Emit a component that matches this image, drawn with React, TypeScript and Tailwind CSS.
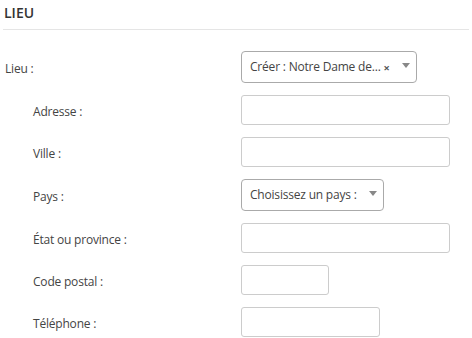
const font = { fontFamily: '"Segoe UI", "Open Sans", "Noto Sans", sans-serif' };

function TextInput({ width }: { width: string }) {
  return (
    <input
      type="text"
      className={`${width} h-[30px] rounded-[3px] border border-[#cccccc] bg-white px-2 text-[12px] text-[#444] outline-none`}
    />
  );
}

function Select({ label, width, clearable }: { label: string; width: string; clearable?: boolean }) {
  return (
    <div
      className={`${width} flex h-[32px] items-center rounded-[4px] border border-[#aaaaaa] bg-white pl-[8px] pr-[6px] text-[12px] tracking-[-0.2px] text-[#444]`}
    >
      <span className="whitespace-nowrap">{label}</span>
      {clearable && <span className="ml-[3px] text-[11px] font-bold leading-none text-[#555]">×</span>}
      <span className="ml-auto mb-[3px] border-x-[4px] border-t-[5px] border-x-transparent border-t-[#888]" />
    </div>
  );
}

function Row({ label, indent, children }: { label: string; indent?: boolean; children: React.ReactNode }) {
  return (
    <div className="flex items-center">
      <label
        className={`w-[241px] shrink-0 pt-[3px] text-[12px] tracking-[-0.2px] text-[#444] ${indent ? 'pl-[33px]' : 'pl-[5px]'}`}
      >
        {label}
      </label>
      {children}
    </div>
  );
}

export default function App() {
  return (
    <div className="h-[338px] w-[472px] overflow-hidden bg-white" style={font}>
      {/* Header */}
      <div className="mx-[3px] border-b border-[#e5e5e5] pb-[7px] pl-[1px] pt-[4px]">
        <h3 className="text-[14px] font-semibold leading-[18px] text-[#333]">LIEU</h3>
      </div>

      {/* Form */}
      <div className="mt-[21px] flex flex-col gap-3">
        <Row label="Lieu :">
          <Select label="Créer : Notre Dame de..." width="w-[176px]" clearable />
        </Row>
        <Row label="Adresse :" indent>
          <TextInput width="w-[209px]" />
        </Row>
        <Row label="Ville :" indent>
          <TextInput width="w-[209px]" />
        </Row>
        <Row label="Pays :" indent>
          <Select label="Choisissez un pays :" width="w-[143px]" />
        </Row>
        <Row label="État ou province :" indent>
          <TextInput width="w-[209px]" />
        </Row>
        <Row label="Code postal :" indent>
          <TextInput width="w-[88px]" />
        </Row>
        <Row label="Téléphone :" indent>
          <TextInput width="w-[139px]" />
        </Row>
      </div>
    </div>
  );
}
